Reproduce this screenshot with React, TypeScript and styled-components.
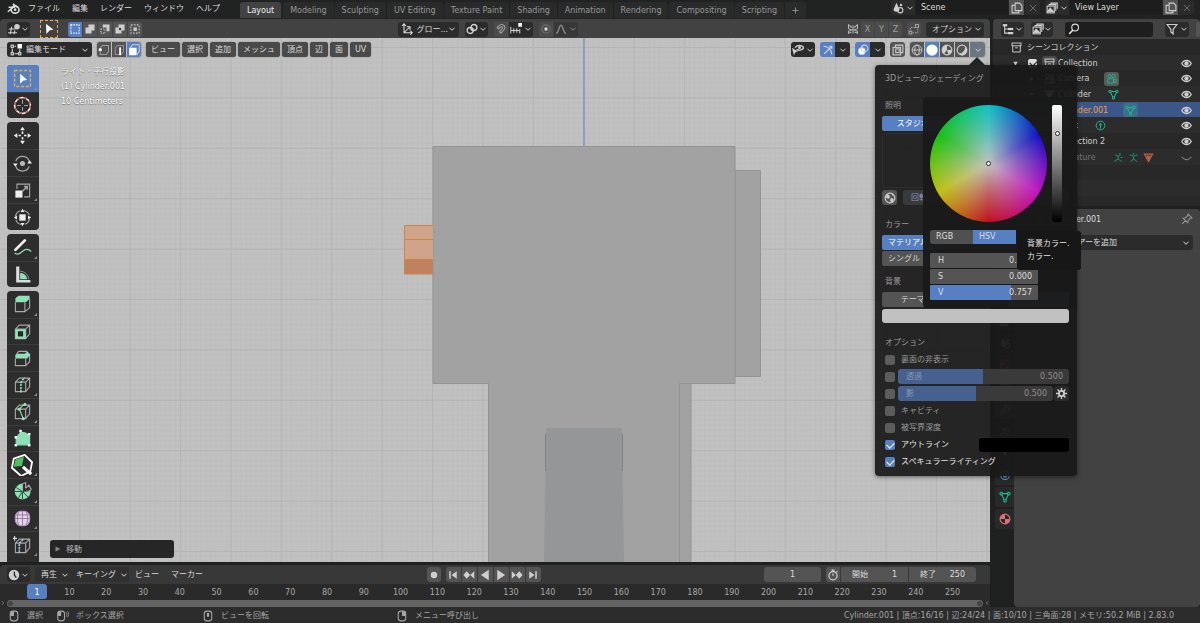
import React from "react";
import styled, { createGlobalStyle, css } from "styled-components";

const font = `"DejaVu Sans", "Noto Sans CJK JP", sans-serif`;
const blue = "#5680c2";
const green = "#8fe0b5";
const teal = "#1fb58f";

const Global = createGlobalStyle`
  * { box-sizing: border-box; }
  body { margin: 0; background: #1f2020; }
  body, button, input, select { font-family: ${font}; font-size: 8px; line-height: 15px; color: #dcdcdc; }
  button, input, select { margin: 0; padding: 0; border: 0; background: none; min-width: 0; }
  button { cursor: pointer; white-space: nowrap; }
  svg { flex: none; display: block; }
`;

/* ---------- icons ---------- */

const Svg = styled.svg<{ $s?: number }>`
  width: ${(p) => p.$s ?? 12}px;
  height: ${(p) => p.$s ?? 12}px;
  fill: none;
  stroke: currentColor;
  stroke-width: 1.4;
`;

const shapes: Record<string, React.ReactNode> = {
  chevron: <path d="M3 5.500l5 5L13 5.500" strokeWidth="2" />,
  plus: <path d="M8 1v14M1 8h14" strokeWidth="2" />,
  blender: (
    <g>
      <ellipse cx="10" cy="9.500" rx="4.800" ry="4.200" strokeWidth="2" />
      <circle cx="10" cy="9.500" r="1.700" fill="currentColor" stroke="none" />
      <path d="M9.500 5.500L7.500 2.500l6 4M2 6.500h8M1 12l6-5" strokeWidth="1.900" />
    </g>
  ),
  grid3d: (
    <g>
      <path d="M1 8h9M0 13h12M5 5L3 15M9 10l-1 5" strokeWidth="1.600" />
      <circle cx="12" cy="5" r="3.700" fill="currentColor" stroke="none" />
    </g>
  ),
  cursor: <path d="M4 1l10 8-5 .5-4.500 5z" fill="currentColor" stroke="none" />,
  selNew: <rect x="2.500" y="2.500" width="11" height="11" strokeDasharray="2 1.500" stroke="#fff" />,
  selAdd: <path d="M6 2h8v8h-4v4H2V6h4z" fill="currentColor" stroke="none" />,
  selSub: (
    <g>
      <path d="M5 2h9v9h-4V6H5z" fill="currentColor" stroke="none" />
      <rect x="2.500" y="8" width="5.500" height="5.500" strokeDasharray="1.500 1.500" />
    </g>
  ),
  selXor: (
    <g>
      <path d="M6 2h8v8h-4v4H2V6h4z" fill="currentColor" stroke="none" />
      <rect x="6.500" y="6.500" width="3" height="3" fill="#3c3c3c" stroke="none" />
    </g>
  ),
  selAnd: (
    <g>
      <rect x="2.500" y="2.500" width="11" height="11" strokeDasharray="2 2" />
      <rect x="6" y="6" width="4.500" height="4.500" fill="currentColor" stroke="none" />
    </g>
  ),
  axes: <path d="M4 1v12h11M1.500 4L4 1l2.500 3M12.500 10.500L15 13l-2.500 2.500M4 13l7-7M7.500 5H12v4.500" />,
  link: (
    <g strokeWidth="1.800">
      <circle cx="5.500" cy="10" r="4" />
      <circle cx="10.500" cy="6" r="4" />
      <circle cx="8" cy="8" r="1.200" fill="currentColor" />
    </g>
  ),
  magnet: <path d="M3 6l4-3.500c5-2 8 3 5 6.500l-4 4.500-2-2 4-4.500c1-2-1-2.500-2-1.500L4.500 8z" />,
  snap: (
    <g>
      <path d="M1 5v9M1 10h11M5 7v6M9 7v6M13 8v6" />
      <rect x="11" y="0" width="5" height="5" fill="#fff" stroke="none" />
    </g>
  ),
  prop: (
    <g>
      <circle cx="8" cy="8" r="5.500" opacity=".4" />
      <circle cx="8" cy="8" r="2.200" fill="#ddd" stroke="none" />
    </g>
  ),
  falloff: <path d="M1.500 14c4-1 3.500-11 6.500-11s2.500 10 6.500 11" strokeWidth="1.800" />,
  butterfly: <path d="M8 3v11M6.500 6L2 2.500v5L6.500 9 2 11v2.500l4-1.500M9.500 6L14 2.500v5L9.500 9l4.500 2v2.500l-4-1.500" />,
  merge: (
    <g>
      <path d="M3 12V6h6M6 13h7V8" strokeDasharray="2 1.500" />
      <rect x="10" y="2" width="4" height="4" />
      <rect x="1.500" y="11" width="3.500" height="3.500" />
    </g>
  ),
  editMode: (
    <g>
      <path d="M3 6v5M6 13h6M13 7v4M6 3h2" />
      <rect x="1.500" y="1.500" width="3" height="3" />
      <rect x="1.500" y="11.500" width="3" height="3" />
      <rect x="11.500" y="11.500" width="3" height="3" />
      <rect x="10" y="0" width="6" height="6" fill="#fff" stroke="none" />
    </g>
  ),
  vert: (
    <g>
      <path d="M3 5l3-3h8v8l-3 4H3v-4" opacity=".6" />
      <circle cx="3" cy="7.500" r="2.200" fill="#fff" stroke="none" />
    </g>
  ),
  edge: (
    <g>
      <path d="M3 14V5l3-3h8v8l-3 4z" opacity=".5" />
      <path d="M9.500 4.500V15" stroke="#fff" strokeWidth="2.500" />
    </g>
  ),
  face: (
    <g>
      <path d="M3 5l3-4h9v9l-3 4" />
      <rect x="1.500" y="5" width="10" height="10" fill="#fff" stroke="none" />
    </g>
  ),
  eyeCursor: (
    <g>
      <path d="M4 5c2-4 9-4 12 0-3 4-8 4-10 2" strokeWidth="1.800" />
      <circle cx="10" cy="4.800" r="2" fill="currentColor" stroke="none" />
      <path d="M0 5l8 5-3.500 1L2.500 15z" fill="currentColor" stroke="none" />
    </g>
  ),
  gizmo: <path d="M2 3c5 0 11 4 11 11M3 13L13 3M9.500 3H13v3.500" strokeWidth="1.600" />,
  overlay: (
    <g>
      <circle cx="6.500" cy="9.500" r="4.500" fill="#fff" />
      <circle cx="10" cy="6" r="4.500" />
    </g>
  ),
  xray: (
    <g>
      <rect x="1.500" y="4.500" width="10" height="10" />
      <path d="M4.500 4V1.500h10v10H12" />
      <rect x="5" y="6.500" width="4.500" height="5" />
    </g>
  ),
  wire: (
    <g strokeWidth="1.200">
      <circle cx="8" cy="8" r="6.500" />
      <ellipse cx="8" cy="8" rx="3" ry="6.500" />
      <path d="M1.500 8h13" />
    </g>
  ),
  solid: <circle cx="8" cy="8" r="7.500" fill="#fff" stroke="none" />,
  matprev: (
    <g>
      <circle cx="8" cy="8" r="6.500" />
      <path d="M8 8V1.500A6.500 6.500 0 0 0 4 13zM8 8h6.500A6.500 6.500 0 0 1 10 14z" fill="currentColor" stroke="none" />
    </g>
  ),
  rendered: (
    <g>
      <circle cx="8" cy="8" r="6.500" />
      <path d="M13 5a6 6 0 0 1-8 8.500C10 13 12 9 13 5z" fill="currentColor" />
    </g>
  ),
  scene: (
    <g>
      <path d="M6 1l4 9c0 4-8 4-8 0zM12 2l1 2" fill="currentColor" stroke="none" />
      <circle cx="11" cy="11" r="3.500" />
      <circle cx="12" cy="4" r="1.600" fill="currentColor" stroke="none" />
    </g>
  ),
  copy: (
    <g>
      <path d="M5.500 1.500h6l3 3v7h-9z" />
      <path d="M5 4.500H1.500v10h9V12" />
    </g>
  ),
  close: <path d="M2 2l12 12M14 2L2 14" strokeWidth="1.600" />,
  layers: (
    <g>
      <rect x="1.500" y="5.500" width="9.500" height="9" />
      <path d="M4 5V3.500h9V12M6.500 3V1.500H15V9" />
      <path d="M2 13l3.500-5 4.500 5z" fill="currentColor" />
    </g>
  ),
  tree: (
    <g>
      <rect x="1" y="1.500" width="6" height="3" fill="currentColor" stroke="none" />
      <rect x="8" y="6.500" width="7" height="3" fill="currentColor" stroke="none" />
      <rect x="8" y="12" width="7" height="3" fill="currentColor" stroke="none" />
      <path d="M3.500 4v9.500H8M3.500 8H8" />
    </g>
  ),
  search: (
    <g strokeWidth="1.500">
      <circle cx="9.500" cy="6" r="4.500" />
      <path d="M6.500 9.500L1.500 14.500" strokeWidth="2" />
    </g>
  ),
  filter: <path d="M1.500 2h13L9.500 8.500v6l-3-2.500V8.500z" strokeWidth="1.600" />,
  box: (
    <g>
      <rect x="1.500" y="1.500" width="13" height="4" />
      <path d="M2.500 5.500v9h11v-9M6 8.500h4" />
    </g>
  ),
  tri: <path d="M3 3l10 5-10 5z" fill="currentColor" stroke="none" />,
  triDown: <path d="M3 4l5 9 5-9z" fill="currentColor" stroke="none" />,
  eye: (
    <g strokeWidth="1.700">
      <path d="M1 8c3.500-6 10.500-6 14 0-3.500 6-10.500 6-14 0z" />
      <circle cx="8" cy="8" r="2.300" fill="currentColor" />
    </g>
  ),
  eyeShut: <path d="M1 7c3.500 5.500 10.500 5.500 14 0" strokeWidth="1.600" />,
  mesh: (
    <g strokeWidth="1.500">
      <path d="M4.500 3.500h7M3.500 4.500L7 12M12.500 4.500L9 12" />
      <circle cx="3" cy="3.500" r="1.700" />
      <circle cx="13" cy="3.500" r="1.700" />
      <circle cx="8" cy="13" r="1.700" />
    </g>
  ),
  camera: (
    <g>
      <circle cx="5" cy="4.500" r="2.500" />
      <circle cx="11" cy="4.500" r="2.500" />
      <path d="M2.500 8.500h8.500v6H2.500zM11 10.500l3.500-2v6l-3.500-2" />
    </g>
  ),
  light: (
    <g>
      <circle cx="8" cy="8" r="6.300" />
      <circle cx="8" cy="6.500" r="1.700" fill="currentColor" stroke="none" />
      <path d="M8 7v5.500" />
    </g>
  ),
  pose: <path d="M9 2l2 1M3 4l5 2 3-2M8 6l-1 4-5 4M7 10l6 4M11 8h3" strokeWidth="1.700" />,
  bone: <path d="M8 1v3M2 4l6 2 6-2M8 6v4l-4 4M8 10l5 4" strokeWidth="1.700" />,
  vgroup: <path d="M2 3h12L8 14zM6 6h4L8 10z" strokeWidth="1.700" />,
  pin: <path d="M9.500 1.500l5 5-2 .5-3 3-.5 3L3 7l3-.5 3-3zM6 10l-4.500 4.500" />,
  globe: (
    <g>
      <circle cx="8" cy="8" r="6.500" strokeWidth="1.500" />
      <path d="M3 3l4 1 1 3-2 2-3-1zM9 8l4 1-2 5-3-2zM10 2l3 2-2 1z" fill="currentColor" stroke="none" />
    </g>
  ),
  gear: (
    <g>
      <circle cx="8" cy="8" r="3.800" strokeWidth="2.600" />
      <path d="M8 0v4M8 12v4M0 8h4M12 8h4M2.300 2.300l3 3M10.700 10.700l3 3M2.300 13.700l3-3M10.700 5.300l3-3" strokeWidth="2" />
    </g>
  ),
  wrench: <path d="M10 2a4 4 0 0 0-2 5L2 13l2 2 6-6a4 4 0 0 0 5-4l-3 1.500L10 5z" />,
  physics: (
    <g strokeWidth="1.600">
      <circle cx="8" cy="8.500" r="5.500" />
      <circle cx="8" cy="9" r="2" fill="currentColor" />
      <path d="M9 3l4-2.500" />
    </g>
  ),
  material: (
    <g>
      <circle cx="8" cy="8" r="6.500" strokeWidth="1.600" />
      <path d="M8 8V1.500A6.500 6.500 0 0 0 1.500 8zM8 8v6.500A6.500 6.500 0 0 0 14.500 8z" fill="currentColor" stroke="none" />
    </g>
  ),
  clock: (
    <g>
      <circle cx="8" cy="8" r="7" fill="currentColor" stroke="none" />
      <path d="M8.500 3.500V8l2.500 3.500" stroke="#2a2a2a" strokeWidth="1.800" />
    </g>
  ),
  stopwatch: (
    <g strokeWidth="1.600">
      <circle cx="8" cy="9" r="5.500" />
      <path d="M8 9V6M6 1.500h4M8 1.500v2M12.500 4.500l1.500-1.500" />
    </g>
  ),
  record: <circle cx="8" cy="8" r="4.300" fill="currentColor" stroke="none" />,
  first: <path d="M3 3h2v10H3zM13 3v10L6 8z" fill="currentColor" stroke="none" />,
  prevKey: <path d="M5 3l4.500 5L5 13 .5 8zM15 3v10L9.500 8z" fill="currentColor" stroke="none" />,
  back: <path d="M13 1v14L2.500 8z" fill="currentColor" stroke="none" />,
  play: <path d="M3 1v14L13.500 8z" fill="currentColor" stroke="none" />,
  nextKey: <path d="M11 3l4.500 5L11 13 6.500 8zM1 3v10L6.500 8z" fill="currentColor" stroke="none" />,
  last: <path d="M13 3h-2v10h2zM3 3v10l7-5z" fill="currentColor" stroke="none" />,
  mouseL: (
    <g>
      <rect x="3" y="1.500" width="10" height="13" rx="3.500" />
      <path d="M3 2h5v6H3z" fill="currentColor" stroke="none" />
    </g>
  ),
  mouseDrag: (
    <g>
      <rect x="1" y="1.500" width="9" height="13" rx="3.500" />
      <path d="M1 2h4.500v6H1z" fill="currentColor" stroke="none" />
      <path d="M12 3c1.500 1 1.500 4 0 6M14 1.500c2 2.500 2 6 0 8.500" strokeWidth="1" />
    </g>
  ),
  mouseM: (
    <g>
      <rect x="3" y="1.500" width="10" height="13" rx="3.500" />
      <path d="M8 4v5" strokeWidth="3" />
    </g>
  ),
  mouseR: (
    <g>
      <rect x="3" y="1.500" width="10" height="13" rx="3.500" />
      <path d="M8 2h5v6H8z" fill="currentColor" stroke="none" />
    </g>
  ),
  left: <path d="M11 3L6 8l5 5" strokeWidth="1.800" />,
  right: <path d="M5 3l5 5-5 5" strokeWidth="1.800" />,
};

const Icon = ({ n, s }: { n: string; s?: number }) => (
  <Svg $s={s} viewBox="0 0 16 16" aria-hidden="true">
    {shapes[n]}
  </Svg>
);

/* Tool icons use a 24 unit grid */
const cube = "M3 9l5-5h13v11l-5 6H3zM3 9h13v12M16 9l5-5";
const tools: Record<string, React.ReactNode> = {
  select: (
    <g>
      <rect x="2" y="2" width="20" height="20" stroke="#f2a93b" strokeWidth="1.800" strokeDasharray="4 2" />
      <path d="M9 6l9 8-5 .5-4 4z" fill="#fff" stroke="none" />
    </g>
  ),
  cursor3d: (
    <g>
      <circle cx="12" cy="12" r="10" stroke="#fff" strokeWidth="1.800" />
      <circle cx="12" cy="12" r="10" stroke="#c0483c" strokeWidth="1.800" strokeDasharray="4 4" />
      <path d="M12 5v5M12 14v5M5 12h5M14 12h5" strokeWidth="1.200" />
    </g>
  ),
  move: (
    <g fill="#eee" stroke="none">
      <path d="M12 1l3 4.500H9zM12 23l-3-4.500h6zM1 12l4.500-3v6zM23 12l-4.500 3V9z" />
      <path d="M11 7h2v3h-2zM11 14h2v3h-2zM7 11h3v2H7zM14 11h3v2h-3z" />
    </g>
  ),
  rotate: (
    <g>
      <path d="M3.500 9a9 9 0 0 1 17 0M3.500 15.500a9 9 0 0 0 17 0" strokeWidth="1.500" />
      <circle cx="12" cy="12" r="3.200" fill="#bbb" stroke="none" />
      <path d="M0 12h6l-3 4zM18 12h6l-3-4z" fill="#eee" stroke="none" />
    </g>
  ),
  scale: (
    <g>
      <path d="M5 10V4h16v16h-7" />
      <rect x="3" y="12" width="9" height="9" fill="#eee" stroke="none" />
      <path d="M12 13l6-6M14 7h4v4" strokeWidth="1.800" />
    </g>
  ),
  transform: (
    <g>
      <circle cx="12" cy="12" r="9" strokeWidth="1.500" strokeDasharray="9 5" strokeDashoffset="-2" />
      <rect x="8" y="8" width="8" height="8" fill="#eee" stroke="none" />
      <path d="M12 1l2.500 4h-5zM12 23l-2.500-4h5zM1 12l4-2.500v5zM23 12l-4 2.500v-5z" fill="#eee" stroke="none" />
    </g>
  ),
  annotate: (
    <g>
      <path d="M3 15L15 3" stroke="#eee" strokeWidth="3.500" strokeLinecap="round" />
      <path d="M2 19c5 4 8-1 11-3s7-2 10 1" stroke={green} strokeWidth="1.500" />
    </g>
  ),
  measure: (
    <g>
      <path d="M4 2h4v17h14v3H4z" fill="#ddd" stroke="none" />
      <path d="M9 18v-8c5 0 8 3 9 8z" fill={green} stroke="none" />
      <path d="M9 8c6 0 10 4 11 10" strokeWidth="1" />
    </g>
  ),
  extrude: (
    <g>
      <path d="M3 9v12h12V9M15 21l6-5V5" />
      <path d="M3 4l4-3h14v4l-5 4H3z" fill={green} stroke="none" />
    </g>
  ),
  inset: (
    <g>
      <path d={cube} />
      <path d="M3 9h13v12H3z" fill={green} stroke="none" />
      <rect x="7" y="12.500" width="5" height="5" fill="#2d2d2d" stroke="#1c1c1c" />
    </g>
  ),
  bevel: (
    <g>
      <path d="M3 12v9h13v-9M16 21l5-5V7M7 3h11M3 9l4-6" />
      <path d="M5 6h10l3-3 4 4-4 5H3V9z" fill={green} stroke="none" />
    </g>
  ),
  loopcut: (
    <g>
      <path d={cube} />
      <path d="M10 22V9l5-6" stroke={green} strokeWidth="2" strokeDasharray="3 1" />
    </g>
  ),
  knife: (
    <g>
      <path d={cube} />
      <path d="M15 2L8 9l5 12" stroke={green} />
      <g fill={green} stroke="none">
        <circle cx="15" cy="3" r="2" />
        <circle cx="8" cy="9" r="2" />
        <circle cx="13" cy="21" r="2" />
      </g>
    </g>
  ),
  poly: (
    <g>
      <path d="M4 20V11l6-7 6 1 5 4v11z" fill={green} stroke={green} />
      <g fill="#fff" stroke="none">
        <rect x="2" y="19" width="3" height="3" />
        <rect x="19" y="19" width="3" height="3" />
        <rect x="2" y="9" width="3" height="3" />
        <rect x="8" y="1" width="3" height="3" />
        <rect x="19" y="5" width="3" height="3" />
      </g>
    </g>
  ),
  addon: (
    <g>
      <path d="M3 5l12-4 8 8-2 10-10 5-10-9z" stroke="#fff" strokeWidth="2" />
      <path d="M5 6l9-3-2 10-9 1z" fill="#4fc060" stroke="none" />
      <path d="M13 14l9 8" stroke="#fff" strokeWidth="3.500" />
    </g>
  ),
  spin: (
    <g>
      <path d="M12 12V2a10 10 0 1 0 10 8z" fill={green} stroke="none" />
      <path d="M12 12l-8-5M12 12H2M12 12l-5 8M12 12v10M12 12l7 7M12 12l10-1" stroke="#254a3a" strokeWidth="1.200" />
      <path d="M12 12V2l4-1v7M16 8l4-4 3 5-4 4" />
    </g>
  ),
  smooth: (
    <g>
      <rect x="3" y="3" width="18" height="18" rx="7" fill="#e3d3e8" stroke="#b79ac2" />
      <path d="M3 12h18M12 3v18M7 4c-2 5-2 11 0 16M17 4c2 5 2 11 0 16M4 7.500h16" stroke="#8a6f95" strokeWidth="1" />
    </g>
  ),
  slide: (
    <g>
      <path d={cube} />
      <path d="M8 21V9l5-5" stroke="#a5c2ee" strokeWidth="2" strokeDasharray="3 1" />
      <path d="M2 0v6M-1 3h6" stroke="#ddd" />
    </g>
  ),
};

/* ---------- shared controls ---------- */

const Row = styled.div<{ $gap?: number }>`
  display: flex;
  align-items: center;
  gap: ${(p) => p.$gap ?? 0}px;
`;

const ctl = css`
  height: 15px;
  border-radius: 3px;
  display: flex;
  align-items: center;
`;

const DropButton = styled.button<{ $w?: number; $dim?: boolean }>`
  ${ctl}
  width: ${(p) => (p.$w ? `${p.$w}px` : "auto")};
  padding: 0 1px;
  justify-content: space-between;
  background: ${(p) => (p.$dim ? "#383838" : "#2b2b2b")};
  color: ${(p) => (p.$dim ? "#868686" : "#cfcfcf")};
`;

const Group = styled.div<{ $border?: boolean; $gap?: number }>`
  display: flex;
  gap: ${(p) => p.$gap ?? 1}px;
  border-radius: 3px;
  ${(p) => p.$border && "box-shadow: 0 0 0 1px #8a8a8a66;"}
  & > *:not(:first-child) { border-top-left-radius: 0; border-bottom-left-radius: 0; }
  & > *:not(:last-child) { border-top-right-radius: 0; border-bottom-right-radius: 0; }
`;

type Tone = "on" | "off" | "dark" | "dim";
const tones: Record<Tone, string> = { on: blue, off: "#545454", dark: "#2b2b2b", dim: "#4c4c4c" };

const IconButton = styled.button<{ $tone?: Tone; $w?: number }>`
  ${ctl}
  justify-content: center;
  width: ${(p) => p.$w ?? 14}px;
  background: ${(p) => tones[p.$tone ?? "off"]};
  color: ${(p) => (p.$tone === "dim" ? "#a0a0a0" : "#cfcfcf")};
`;

const SelectBox = styled.label<{ $w?: number }>`
  ${ctl}
  width: ${(p) => (p.$w ? `${p.$w}px` : "100%")};
  padding: 0 3px;
  gap: 4px;
  background: #2b2b2b;
  select { appearance: none; flex: 1; height: 15px; }
  svg:last-child { margin-left: -7px; pointer-events: none; }
`;

const Select = ({ icon, w, label, value }: { icon?: string; w?: number; label: string; value: string }) => (
  <SelectBox $w={w}>
    {icon && <Icon n={icon} />}
    <select aria-label={label}>
      <option>{value}</option>
    </select>
    <Icon n="chevron" s={8} />
  </SelectBox>
);

const IconDrop = ({ icon, w = 23, dim, label }: { icon: string; w?: number; dim?: boolean; label: string }) => (
  <DropButton $w={w} $dim={dim} aria-label={label}>
    <Icon n={icon} />
    <Icon n="chevron" s={8} />
  </DropButton>
);

/* ---------- top bar ---------- */

const TopBar = styled.header`
  display: flex;
  height: 19px;
  padding: 0 6px 0 7px;
  background: #212222;
`;
const MenuBar = styled.nav`
  display: flex;
  gap: 12px;
  height: 15px;
  align-items: center;
  margin: 1px 20px 0 8px;
`;
const MenuButton = styled.button`
  height: 15px;
`;
const Tabs = styled.nav`
  display: flex;
  flex: 1;
  gap: 1px;
  align-items: flex-end;
  padding-bottom: 1px;
`;
const Tab = styled.button<{ $on?: boolean }>`
  height: 16px;
  padding: 1px 7px 0;
  margin-right: ${(p) => (p.$on ? 1 : 0)}px;
  border-radius: 3px 3px 0 0;
  background: ${(p) => (p.$on ? "#424242" : "#292a2a")};
  color: ${(p) => (p.$on ? "#f0f0f0" : "#989898")};
`;
const NameField = styled.input`
  width: 92px;
  height: 15px;
  padding: 0 5px;
  background: #1d1d1d;
`;
const Logo = styled.div`
  padding-top: 2px;
`;

const tabNames = ["Modeling", "Sculpting", "UV Editing", "Texture Paint", "Shading", "Animation", "Rendering", "Compositing", "Scripting"];

const DataBlock = ({ icon, name }: { icon: string; name: string }) => (
  <Group>
    <IconDrop icon={icon} w={24} label={name} />
    <NameField aria-label={`${name} name`} defaultValue={name} />
    <IconButton aria-label="New" $w={15}>
      <Icon n="copy" />
    </IconButton>
    <RemoveButton aria-label="Remove" $tone="dark" $w={15}>
      <Icon n="close" s={8} />
    </RemoveButton>
  </Group>
);
const RemoveButton = styled(IconButton)`
  color: #7a7a7a;
`;

/* ---------- page frame ---------- */

const Page = styled.div`
  display: flex;
  flex-direction: column;
  min-height: 100vh;
  background: #1f2020;
`;
const Main = styled.main`
  flex: 1;
  display: grid;
  grid-template-columns: minmax(0, 1fr) 207px;
  gap: 3px;
`;
const Column = styled.div`
  display: flex;
  flex-direction: column;
  gap: 3px;
  min-width: 0;
`;
const Area = styled.section<{ $grow?: boolean }>`
  display: flex;
  flex-direction: column;
  flex: ${(p) => (p.$grow ? 1 : "none")};
`;
const ToolHeader = styled.div`
  display: grid;
  grid-template-columns: 1fr auto 1fr;
  align-items: center;
  height: 19px;
  padding: 1px 6px 0 7px;
  background: #424242;
  border-radius: 4px 4px 0 0;
`;
const Middle = styled.div<{ $gap: number }>`
  display: flex;
  align-items: center;
  gap: ${(p) => p.$gap}px;
  margin-right: 16px;
`;
const End = styled.div<{ $gap: number }>`
  display: flex;
  align-items: center;
  justify-content: flex-end;
  gap: ${(p) => p.$gap}px;
`;
const TopEnd = styled(End)`
  align-items: flex-start;
`;
const ActiveTool = styled.span`
  display: flex;
  align-items: center;
  justify-content: center;
  width: 18px;
  height: 18px;
  margin: 0 10px;
  border: 1px dashed #f2a93b;
  color: #fff;
`;
const Plain = styled.span`
  display: flex;
  color: #b5b5b5;
`;

/* ---------- 3D viewport ---------- */

const Viewport = styled.div`
  position: relative;
  flex: 1;
  display: flex;
  flex-direction: column;
  background: #c1c1c1;
`;
const Scene = styled.svg`
  position: absolute;
  inset: 0;
  width: 100%;
  height: 100%;
`;
const ViewHeader = styled.div`
  position: relative;
  z-index: 2;
  display: flex;
  justify-content: space-between;
  padding: 4px 5px 7px 7px;
`;
const ViewMenu = styled.button`
  height: 15px;
  padding: 0 5px;
  border-radius: 3px;
  background: #4a4a4a;
  box-shadow: 0 0 1px #333;
`;
const ViewBody = styled.div`
  position: relative;
  flex: 1;
  display: flex;
  gap: 11px;
  padding-left: 7px;
`;
const Toolbar = styled.div`
  display: flex;
  flex-direction: column;
  gap: 4px;
  width: 32px;
  padding-top: 1px;
`;
const ToolBlock = styled.div<{ $h: number }>`
  display: grid;
  grid-auto-rows: 1fr;
  height: ${(p) => p.$h}px;
  border-radius: 4px;
  overflow: hidden;
  background: #2d2d2d;
  &:last-child { border-radius: 4px 4px 0 0; padding-bottom: 4px; }
`;
const ToolButton = styled.button<{ $on?: boolean }>`
  display: flex;
  align-items: center;
  justify-content: center;
  position: relative;
  min-height: 0;
  padding-right: 2px;
  color: #a8a8a8;
  background: ${(p) => (p.$on ? blue : "transparent")};
  & + & { border-top: 1px solid #3c3c3c; }
`;
const Corner = styled.i`
  position: absolute;
  right: 2px;
  bottom: 2px;
  border: solid transparent;
  border-width: 3px 0 0 3px;
  border-right: 3px solid #8d8d8d;
  border-top: 3px solid transparent;
  border-left: 0;
`;
const ViewInfo = styled.div`
  display: flex;
  flex-direction: column;
  justify-content: space-between;
  padding-bottom: 4px;
`;
const InfoText = styled.p`
  margin: 0 0 0 11px;
  color: #fff;
  text-shadow: 0 1px 1px #777, 0 0 1px #888;
`;
const OperatorPanel = styled.button`
  display: flex;
  align-items: center;
  gap: 4px;
  width: 124px;
  height: 18px;
  padding-left: 4px;
  border-radius: 3px;
  background: #262626;
  color: #b5b5b5;
  svg { color: #888; }
`;

type Tool = [string, boolean];
const toolBlocks: { h: number; items: Tool[] }[] = [
  { h: 53, items: [["select", true], ["cursor3d", false]] },
  { h: 108, items: [["move", false], ["rotate", false], ["scale", true], ["transform", false]] },
  { h: 53, items: [["annotate", true], ["measure", false]] },
  {
    h: 271,
    items: [
      ["extrude", true], ["inset", false], ["bevel", false], ["loopcut", true], ["knife", true],
      ["poly", false], ["addon", true], ["spin", true], ["smooth", true], ["slide", true],
    ],
  },
];

const lines = (start: number, step: number, end: number) => {
  const out: number[] = [];
  for (let v = start; v < end; v += step) out.push(v);
  return out;
};

const ModelView = () => (
  <Scene viewBox="0 38 990 524" preserveAspectRatio="xMidYMid slice" aria-hidden="true">
    <g stroke="#b9b9b9" strokeWidth="1" opacity=".35">
      {lines(4.1, 5.04, 990).map((x) => <path key={x} d={`M${x} 38V562`} />)}
      {lines(42.4, 5.04, 562).map((y) => <path key={y} d={`M0 ${y}H990`} />)}
    </g>
    <g stroke="#b4b4b4" strokeWidth="1">
      {lines(29.4, 50.4, 990).map((x) => <path key={x} d={`M${x} 38V562`} />)}
      {lines(47.5, 50.4, 562).map((y) => <path key={y} d={`M0 ${y}H990`} />)}
    </g>
    <path d="M584 38V147" stroke="#6f8cc4" strokeWidth="1.200" />
    <g fill="#a2a2a2" stroke="#929494">
      <path d="M735 170.500h25.500v206H735z" />
      <path d="M679.500 383.500h11.500V563h-11.500z" />
      <path d="M433 146.500h302v237H679.500V563H488.500V383.500H433z" />
    </g>
    <path d="M546 428h76l2 134h-80z" fill="#949698" />
    <path d="M545.500 434v37M622.500 434v37" stroke="#7f8282" />
    <path d="M404.500 225.500H433v34h-28.500z" fill="#cfa48b" />
    <path d="M404.500 259.500H433V274h-28.500z" fill="#c08160" />
    <path d="M433 225.500h-28.500V274H433M404.500 239.500H433M404.500 259.500H433" fill="none" stroke="#cf8548" />
  </Scene>
);

/* ---------- shading popover ---------- */

const Anchor = styled.div`
  position: relative;
  display: flex;
`;
const Popover = styled.div`
  position: absolute;
  top: 23px;
  right: -92px;
  width: 202px;
  padding: 6px 8px 6px 7px;
  border-radius: 4px;
  background: rgba(25, 25, 25, 0.93);
  box-shadow: 0 1px 4px rgba(0, 0, 0, 0.5);
  color: #8f8f8f;
  &::before {
    content: "";
    position: absolute;
    top: -8px;
    left: 94px;
    border: 8px solid transparent;
    border-top: 0;
    border-bottom-color: #222;
  }
`;
const Heading = styled.h3<{ $top?: number }>`
  margin: ${(p) => p.$top ?? 0}px 0 0 3px;
  font-size: 8px;
  font-weight: 400;
  line-height: 15px;
  color: #9c9c9c;
`;
const Choices = styled.div`
  display: grid;
  grid-template-columns: repeat(3, 1fr);
  gap: 1px;
  margin-top: 3px;
`;
const Choice = styled.button<{ $on?: boolean }>`
  height: 15px;
  padding: 0 6px;
  overflow: hidden;
  border-radius: 2px;
  background: ${(p) => (p.$on ? blue : "#545454")};
  color: ${(p) => (p.$on ? "#fff" : "#d5d5d5")};
`;
const WideChoice = styled(Choice)`
  text-align: left;
`;
const Preview = styled.div`
  height: 55px;
  margin: 2px 0;
  border: 1px solid #2e2e2e;
  border-radius: 3px;
`;
const Swatch = styled.button<{ $c: string; $w?: number }>`
  display: block;
  width: ${(p) => (p.$w ? `${p.$w}px` : "100%")};
  height: 14px;
  border-radius: 3px;
  background: ${(p) => p.$c};
`;
const OptionRow = styled.div`
  display: flex;
  align-items: center;
  height: 17px;
  gap: 1px;
  padding-left: 3px;
`;
const Check = styled.label<{ $on?: boolean }>`
  display: flex;
  align-items: center;
  gap: 6px;
  flex: 1;
  color: ${(p) => (p.$on ? "#e8e8e8" : "#9a9a9a")};
`;
const Box = styled.input.attrs({ type: "checkbox" })`
  appearance: none;
  position: relative;
  flex: none;
  width: 10px;
  height: 10px;
  border-radius: 2px;
  background: #5c5c5c;
  &:checked { background: ${blue}; }
  &:checked::after {
    content: "";
    position: absolute;
    left: 3px;
    top: 1px;
    width: 4px;
    height: 6px;
    border: solid #fff;
    border-width: 0 1px 1px 0;
    transform: rotate(45deg);
  }
`;
const SliderBox = styled.label<{ $fill: number; $dim?: boolean }>`
  display: flex;
  flex: 1;
  min-width: 0;
  height: 15px;
  padding: 0 6px 0 8px;
  border-radius: 3px;
  background: linear-gradient(90deg, ${(p) => (p.$dim ? "#46618f" : blue)} ${(p) => p.$fill}%, ${(p) => (p.$dim ? "#3a3a3a" : "#545454")} 0);
  color: ${(p) => (p.$dim ? "#8799b8" : "#dcdcdc")};
  input { flex: 1; width: 20px; height: 15px; text-align: right; color: ${(p) => (p.$dim ? "#909090" : "#dcdcdc")}; }
`;
const Slider = ({ label, value, fill, dim }: { label: string; value: string; fill: number; dim?: boolean }) => (
  <SliderBox $fill={fill} $dim={dim}>
    {label}
    <input defaultValue={value} />
  </SliderBox>
);
const LightRow = styled.div`
  display: flex;
  gap: 6px;
`;
const BackgroundSwatch = styled(Swatch)`
  margin-top: 2px;
`;
const OptionList = styled.div`
  margin-top: 1px;
`;
const Gap = styled.span`
  width: 1px;
`;

const Picker = styled.div`
  position: absolute;
  top: 32px;
  left: 48px;
  width: 154px;
  padding: 8px 7px;
  border-radius: 4px;
  background: rgba(26, 26, 26, 0.97);
`;
const WheelRow = styled.div`
  display: flex;
`;
const Wheel = styled.div`
  display: grid;
  place-items: center;
  width: 117px;
  height: 117px;
  border-radius: 50%;
  background: radial-gradient(closest-side, #c1c1c1, rgba(193, 193, 193, 0.45) 50%, rgba(193, 193, 193, 0)),
    conic-gradient(from 180deg, #c1101c, #c1c110, #10c110, #10c1c1, #1010c1, #c110c1, #c1101c);
`;
const Dot = styled.i`
  width: 5px;
  height: 5px;
  border: 1px solid #222;
  border-radius: 50%;
  background: #fff;
`;
const ValueBar = styled.div`
  display: flex;
  justify-content: center;
  width: 10px;
  margin-left: auto;
  margin-right: 8px;
  padding-top: 26px;
  border-radius: 2px;
  background: linear-gradient(#fff, #000);
`;
const ModelTabs = styled.div`
  display: grid;
  grid-template-columns: repeat(2, 43px);
  margin: 8px 0 9px;
`;
const ModelTab = styled.button<{ $on?: boolean }>`
  height: 14px;
  padding-left: 6px;
  text-align: left;
  line-height: 14px;
  background: ${(p) => (p.$on ? blue : "#505050")};
  &:first-child { border-radius: 3px 0 0 3px; }
`;
const Channels = styled.div`
  display: flex;
  flex-direction: column;
  gap: 1px;
  width: 108px;
  & > label { border-radius: 1px; flex: none; }
`;
const Tooltip = styled.div`
  position: absolute;
  top: 166px;
  left: 142px;
  width: 64px;
  padding: 6px 0 7px 10px;
  border-radius: 3px;
  background: #171717;
  color: #e6e6e6;
  line-height: 13px;
  white-space: pre;
`;

const ShadingPopover = () => (
  <Popover role="dialog" aria-label="3Dビューのシェーディング">
    <Heading>3Dビューのシェーディング</Heading>
    <Heading $top={12}>照明</Heading>
    <Choices>
      <Choice $on>スタジオ</Choice>
      <Choice aria-label="MatCap" />
      <Choice aria-label="フラット" />
    </Choices>
    <Preview />
    <LightRow>
      <IconButton $w={15} aria-label="World space lighting">
        <Icon n="globe" />
      </IconButton>
      <Slider label="回転" value="" fill={0} dim />
    </LightRow>
    <Heading $top={12}>カラー</Heading>
    <Choices>
      <WideChoice $on>マテリアル</WideChoice>
      <Choice aria-label="オブジェクト" />
      <Choice aria-label="頂点" />
      <WideChoice>シングル</WideChoice>
      <Choice aria-label="ランダム" />
      <Choice aria-label="テクスチャ" />
    </Choices>
    <Heading $top={8}>背景</Heading>
    <Choices>
      <Choice>テーマ</Choice>
      <Choice aria-label="ワールド" />
      <Choice $on aria-label="ビューポート" />
    </Choices>
    <BackgroundSwatch $c="#c1c1c1" aria-label="背景カラー" />
    <Heading $top={12}>オプション</Heading>
    <OptionList>
      <OptionRow>
        <Check><Box />裏面の非表示</Check>
      </OptionRow>
      <OptionRow>
        <Box aria-label="透過を使用" />
        <Gap />
        <Slider label="透過" value="0.500" fill={50} dim />
      </OptionRow>
      <OptionRow>
        <Box aria-label="影を使用" />
        <Gap />
        <Slider label="影" value="0.500" fill={50} dim />
        <IconButton $tone="dark" $w={15} aria-label="影の設定">
          <Icon n="gear" s={11} />
        </IconButton>
      </OptionRow>
      <OptionRow>
        <Check><Box />キャビティ</Check>
      </OptionRow>
      <OptionRow>
        <Check><Box />被写界深度</Check>
      </OptionRow>
      <OptionRow>
        <Check $on><Box defaultChecked />アウトライン</Check>
        <Swatch $c="#000" $w={90} aria-label="アウトラインカラー" />
      </OptionRow>
      <OptionRow>
        <Check $on><Box defaultChecked />スペキュラーライティング</Check>
      </OptionRow>
    </OptionList>
    <Picker>
      <WheelRow>
        <Wheel><Dot /></Wheel>
        <ValueBar><Dot /></ValueBar>
      </WheelRow>
      <ModelTabs>
        <ModelTab>RGB</ModelTab>
        <ModelTab $on>HSV</ModelTab>
      </ModelTabs>
      <Channels>
        <Slider label="H" value="0.000" fill={0} />
        <Slider label="S" value="0.000" fill={0} />
        <Slider label="V" value="0.757" fill={75} />
      </Channels>
    </Picker>
    <Tooltip role="tooltip">{"背景カラー.\nカラー."}</Tooltip>
  </Popover>
);

/* ---------- outliner ---------- */

const OutHeader = styled.div`
  display: flex;
  align-items: center;
  height: 20px;
  padding-left: 8px;
  gap: 7px;
  overflow: hidden;
  background: #424242;
  border-radius: 4px 4px 0 0;
`;
const Search = styled.label`
  ${ctl}
  flex: 1;
  margin: 0 5px;
  padding-left: 3px;
  background: #1e1e1e;
  input { width: 100%; }
`;
const Tree = styled.div`
  display: grid;
  grid-template-rows: repeat(10, 1fr) 10px;
  height: 167px;
  background: #282828;
`;
const TreeRow = styled.div<{ $on?: boolean; $muted?: boolean }>`
  display: flex;
  align-items: center;
  min-height: 0;
  padding: 1px 8px 0 0;
  color: ${(p) => (p.$on ? "#f0a040" : p.$muted ? "#727272" : "#cfcfcf")};
  background: ${(p) => (p.$on ? "#3b5689" : "transparent")};
  &:nth-child(even) { background: ${(p) => (p.$on ? "#3b5689" : "#2c2c2c")}; }
`;
const Slot = styled.span<{ $w: number }>`
  display: flex;
  justify-content: center;
  width: ${(p) => p.$w}px;
`;
const DataIcon = styled.span<{ $c?: string; $box?: string }>`
  display: flex;
  align-items: center;
  justify-content: center;
  width: 15px;
  height: 14px;
  border-radius: 3px;
  color: ${(p) => p.$c ?? teal};
  background: ${(p) => p.$box ?? "transparent"};
`;
const DataIcons = styled.span`
  display: flex;
  margin-left: 15px;
`;
const EyeButton = styled.button<{ $muted?: boolean }>`
  margin-left: auto;
  color: ${(p) => (p.$muted ? "#777" : "#d0d0d0")};
`;
const TreeCheck = styled(Box)`
  width: 9px;
  height: 9px;
  background: #ddd;
  &:checked { background: #ddd; }
  &:checked::after { border-color: #222; top: 0; }
`;

type Item = { name: string; on?: boolean; muted?: boolean; icon: string; data?: { n: string; c?: string; box?: string }[] };
const items: Item[] = [
  { name: "Camera", icon: "camera", data: [{ n: "camera", box: "#5a5a5a" }] },
  { name: "Cylinder", icon: "vgroup", data: [{ n: "mesh" }] },
  { name: "Cylinder.001", icon: "vgroup", on: true, data: [{ n: "mesh", box: "#3c7088" }] },
  { name: "Light", icon: "light", data: [{ n: "light" }] },
  { name: "Collection 2", icon: "box" },
  { name: "Armature", icon: "pose", muted: true, data: [{ n: "pose", c: "#1f8068" }, { n: "bone", c: "#1f8068" }, { n: "vgroup", c: "#b5653f" }] },
];

const Outliner = () => (
  <Area>
    <OutHeader>
      <IconDrop icon="tree" label="Editor type" />
      <IconDrop icon="layers" label="Display mode" w={22} />
      <Search>
        <Icon n="search" />
        <input aria-label="Search" />
      </Search>
      <IconDrop icon="filter" label="Filter" w={24} />
      <IconButton $w={4} aria-label="New collection" />
    </OutHeader>
    <Tree>
      <TreeRow>
        <Slot $w={17} />
        <Slot $w={12}><Icon n="box" s={11} /></Slot>
        <Slot $w={5} />
        シーンコレクション
      </TreeRow>
      <TreeRow>
        <Slot $w={14} />
        <Slot $w={17}><Icon n="triDown" s={7} /></Slot>
        <Slot $w={16}><TreeCheck defaultChecked aria-label="Collection" /></Slot>
        <Slot $w={18}><DataIcon $c="#ccc" $box="#484848"><Icon n="box" s={11} /></DataIcon></Slot>
        Collection
        <EyeButton aria-label="Hide"><Icon n="eye" s={11} /></EyeButton>
      </TreeRow>
      {items.map((it) => (
        <TreeRow key={it.name} $on={it.on} $muted={it.muted}>
          <Slot $w={31} />
          <Slot $w={16}><Icon n="tri" s={6} /></Slot>
          <Slot $w={18}><Icon n={it.icon} s={11} /></Slot>
          {it.name}
          {it.data && (
            <DataIcons>
              {it.data.map((d) => (
                <DataIcon key={d.n} $c={d.c} $box={d.box}><Icon n={d.n} s={11} /></DataIcon>
              ))}
            </DataIcons>
          )}
          <EyeButton $muted={it.muted} aria-label="Hide">
            <Icon n={it.muted ? "eyeShut" : "eye"} s={11} />
          </EyeButton>
        </TreeRow>
      ))}
      <TreeRow />
      <TreeRow />
      <TreeRow />
    </Tree>
  </Area>
);

/* ---------- properties ---------- */

const Props = styled.section`
  flex: 1;
  display: flex;
`;
const PropNav = styled.nav`
  display: flex;
  flex-direction: column;
  gap: 2px;
  width: 21px;
  padding: 36px 0 0 2px;
`;
const PropTab = styled.button<{ $c?: string; $on?: boolean }>`
  display: flex;
  align-items: center;
  justify-content: center;
  height: 20px;
  border-radius: 3px 0 0 3px;
  background: ${(p) => (p.$on ? "#424242" : "#292929")};
  color: ${(p) => p.$c ?? "#b0b0b0"};
`;
const PropBody = styled.div`
  flex: 1;
  padding: 2px 7px 0 5px;
  background: #424242;
  border-radius: 4px;
`;
const Crumb = styled.div`
  display: flex;
  align-items: center;
  height: 16px;
  margin-bottom: 8px;
  padding-left: 14px;
  gap: 3px;
  & > svg { margin-left: auto; color: #999; }
`;
const AddModifier = styled.div`
  select { padding-left: 8px; }
`;

const propTabs: { n: string; c?: string; on?: boolean }[] = [
  { n: "wrench" }, { n: "camera" }, { n: "copy" }, { n: "layers" }, { n: "scene" }, { n: "globe", c: "#c95f5f" },
  { n: "xray", c: "#d08a4a" }, { n: "wrench", c: "#6d94d8", on: true }, { n: "pose", c: "#6d94d8" }, { n: "prop", c: "#6d94d8" },
  { n: "physics", c: "#6d94d8" }, { n: "mesh", c: teal }, { n: "material", c: "#d9707a" },
];

/* ---------- timeline and status ---------- */

const Timeline = styled.section`
  position: relative;
`;
const TimeHeader = styled(ToolHeader)`
  padding: 0 14px 0 7px;
  background: #383838;
`;
const TimeMenus = styled.div`
  display: flex;
  align-items: center;
`;
const TimeGap = styled.span`
  width: 5px;
`;
const TimeDrop = styled.button`
  display: flex;
  align-items: center;
  gap: 4px;
  height: 15px;
  padding: 0 1px 0 6px;
  background: #303030;
`;
const TimeMenu = styled.button`
  height: 15px;
  margin-left: 6px;
  padding-right: 6px;
`;
const FrameField = styled.label<{ $w: number; $center?: boolean }>`
  ${ctl}
  width: ${(p) => p.$w}px;
  padding: 0 11px;
  background: #545454;
  white-space: nowrap;
  input { flex: 1; width: 20px; height: 15px; text-align: ${(p) => (p.$center ? "center" : "right")}; }
`;
const Ruler = styled.div`
  display: grid;
  grid-template-columns: 51px repeat(25, 1fr);
  height: 15px;
  padding-right: 19px;
  background: #2a2a2a;
  color: #a8a8a8;
  text-align: center;
  line-height: 17px;
`;
const Current = styled.div`
  width: 20px;
  height: 15px;
  margin-left: 27px;
  border-radius: 3px;
  background: ${blue};
  color: #fff;
`;
const ScrollTrack = styled.div`
  display: flex;
  align-items: center;
  gap: 1px;
  height: 8px;
  background: #2a2a2a;
  color: #999;
`;
const ScrollThumb = styled.div`
  display: flex;
  align-items: center;
  justify-content: space-between;
  flex: 1;
  height: 7px;
  padding: 0 1px;
  border-radius: 4px;
  background: #646464;
  i { width: 5px; height: 5px; border-radius: 50%; background: #454545; }
`;
const Status = styled.footer`
  display: grid;
  grid-template-columns: 194px 194px 1fr auto;
  align-items: center;
  height: 16px;
  padding: 1px 26px 0 8px;
  background: #2c2c2c;
  color: #a6a6a6;
`;
const OptionsDrop = styled(DropButton)`
  width: 58px;
  padding: 0 2px 0 6px;
`;
const ShadingToggle = styled(IconButton)`
  background: #6b7680;
`;

const transport = ["first", "prevKey", "back", "play", "nextKey", "last"];

export default function App() {
  return (
    <Page lang="ja">
      <Global />
      <TopBar>
        <Logo><Icon n="blender" s={13} /></Logo>
        <MenuBar>
          {["ファイル", "編集", "レンダー", "ウィンドウ", "ヘルプ"].map((m) => <MenuButton key={m}>{m}</MenuButton>)}
        </MenuBar>
        <Tabs>
          <Tab $on>Layout</Tab>
          {tabNames.map((t) => <Tab key={t}>{t}</Tab>)}
          <Tab aria-label="Add workspace"><Icon n="plus" s={7} /></Tab>
        </Tabs>
        <TopEnd $gap={5}>
          <DataBlock icon="scene" name="Scene" />
          <DataBlock icon="layers" name="View Layer" />
        </TopEnd>
      </TopBar>

      <Main>
        <Column>
          <Area $grow>
            <ToolHeader>
              <Row>
                <IconDrop icon="grid3d" label="Editor type" />
                <ActiveTool><Icon n="cursor" /></ActiveTool>
                <Group>
                  {["selNew", "selAdd", "selSub", "selXor", "selAnd"].map((n, i) => (
                    <IconButton key={n} $tone={i ? "off" : "on"} aria-label={n}><Icon n={n} /></IconButton>
                  ))}
                </Group>
              </Row>
              <Middle $gap={6}>
                <Select icon="axes" w={61} label="Orientation" value="グロー..." />
                <IconDrop icon="link" label="Pivot" />
                <Group>
                  <IconButton $tone="dim" aria-label="Snap"><Icon n="magnet" /></IconButton>
                  <IconDrop icon="snap" w={24} label="Snap to" />
                </Group>
                <Group>
                  <IconButton $tone="dim" aria-label="Proportional editing"><Icon n="prop" /></IconButton>
                  <IconDrop icon="falloff" w={24} dim label="Falloff" />
                </Group>
              </Middle>
              <End $gap={5}>
                <Row $gap={2}>
                  <Plain><Icon n="butterfly" /></Plain>
                  <Group>
                    {["X", "Y", "Z"].map((a) => <IconButton key={a} $tone="dim" $w={13}>{a}</IconButton>)}
                  </Group>
                </Row>
                <IconButton $tone="dim" aria-label="Auto merge"><Icon n="merge" /></IconButton>
                <OptionsDrop>オプション<Icon n="chevron" s={8} /></OptionsDrop>
              </End>
            </ToolHeader>

            <Viewport>
              <ModelView />
              <ViewHeader>
                <Row $gap={5}>
                  <Select icon="editMode" w={85} label="モード" value="編集モード" />
                  <Group $border>
                    <IconButton aria-label="頂点選択"><Icon n="vert" /></IconButton>
                    <IconButton aria-label="辺選択"><Icon n="edge" /></IconButton>
                    <IconButton $tone="on" aria-label="面選択"><Icon n="face" /></IconButton>
                  </Group>
                  <Row $gap={2}>
                    {["ビュー", "選択", "追加", "メッシュ", "頂点", "辺", "面", "UV"].map((m) => <ViewMenu key={m}>{m}</ViewMenu>)}
                  </Row>
                </Row>
                <Row $gap={5}>
                  <IconDrop icon="eyeCursor" w={24} label="Visibility" />
                  <Group $gap={0}>
                    <IconButton $tone="on" $w={15} aria-label="Gizmo"><Icon n="gizmo" /></IconButton>
                    <IconButton $tone="dark" $w={15} aria-label="Gizmo options"><Icon n="chevron" s={8} /></IconButton>
                  </Group>
                  <Group $gap={0}>
                    <IconButton $tone="on" $w={15} aria-label="Overlays"><Icon n="overlay" /></IconButton>
                    <IconButton $tone="dark" $w={15} aria-label="Overlay options"><Icon n="chevron" s={8} /></IconButton>
                  </Group>
                  <IconButton $w={15} aria-label="X-ray"><Icon n="xray" /></IconButton>
                  <Anchor>
                    <Group $border>
                      {["wire", "solid", "matprev", "rendered"].map((n) => (
                        <IconButton key={n} $tone={n === "solid" ? "on" : "off"} aria-label={n}><Icon n={n} /></IconButton>
                      ))}
                      <ShadingToggle $w={15} aria-label="シェーディング"><Icon n="chevron" s={8} /></ShadingToggle>
                    </Group>
                    <ShadingPopover />
                  </Anchor>
                </Row>
              </ViewHeader>
              <ViewBody>
                <Toolbar>
                  {toolBlocks.map((b) => (
                    <ToolBlock key={b.items[0][0]} $h={b.h}>
                      {b.items.map(([n, more]) => (
                        <ToolButton key={n} $on={n === "select"} aria-label={n}>
                          <Svg $s={n === "addon" ? 22 : 19} viewBox="0 0 24 24" aria-hidden="true">{tools[n]}</Svg>
                          {more && <Corner />}
                        </ToolButton>
                      ))}
                    </ToolBlock>
                  ))}
                </Toolbar>
                <ViewInfo>
                  <div>
                    <InfoText>ライト・平行投影</InfoText>
                    <InfoText>(1) Cylinder.001</InfoText>
                    <InfoText>10 Centimeters</InfoText>
                  </div>
                  <OperatorPanel><Icon n="tri" s={8} />移動</OperatorPanel>
                </ViewInfo>
              </ViewBody>
            </Viewport>
          </Area>

          <Timeline>
            <TimeHeader>
              <TimeMenus>
                <IconDrop icon="clock" label="Editor type" />
                <TimeGap />
                <TimeDrop>再生<Icon n="chevron" s={8} /></TimeDrop>
                <TimeDrop>キーイング<Icon n="chevron" s={8} /></TimeDrop>
                <TimeMenu>ビュー</TimeMenu>
                <TimeMenu>マーカー</TimeMenu>
              </TimeMenus>
              <Middle $gap={5}>
                <IconButton aria-label="Auto keying"><Icon n="record" /></IconButton>
                <Group>
                  {transport.map((n) => <IconButton key={n} $w={15} aria-label={n}><Icon n={n} /></IconButton>)}
                </Group>
              </Middle>
              <End $gap={5}>
                <FrameField $w={57} $center><input aria-label="Current frame" defaultValue="1" /></FrameField>
                <Group>
                  <IconButton $w={14} aria-label="Preview range"><Icon n="stopwatch" /></IconButton>
                  <FrameField $w={67}>開始<input defaultValue="1" /></FrameField>
                  <FrameField $w={67}>終了<input defaultValue="250" /></FrameField>
                </Group>
              </End>
            </TimeHeader>
            <Ruler>
              <Current>1</Current>
              {Array.from({ length: 25 }, (_, i) => <span key={i}>{(i + 1) * 10}</span>)}
            </Ruler>
            <ScrollTrack>
              <Icon n="right" s={6} />
              <ScrollThumb><i /><i /></ScrollThumb>
              <Icon n="left" s={6} />
            </ScrollTrack>
          </Timeline>
        </Column>

        <Column>
          <Outliner />
          <Props>
            <PropNav>
              {propTabs.map((t, i) => (
                <PropTab key={i} $c={t.c} $on={t.on} aria-label={t.n}><Icon n={t.n} /></PropTab>
              ))}
            </PropNav>
            <PropBody>
              <Crumb>
                <DataIcon $c="#e09050"><Icon n="xray" s={10} /></DataIcon>
                Cylinder.001
                <Icon n="pin" />
              </Crumb>
              <AddModifier>
                <Select label="モディファイアー" value="モディファイアーを追加" />
              </AddModifier>
            </PropBody>
          </Props>
        </Column>
      </Main>

      <Status>
        <Row $gap={14}>
          <Row $gap={7}><Icon n="mouseL" />選択</Row>
          <Row $gap={7}><Icon n="mouseDrag" />ボックス選択</Row>
        </Row>
        <Row $gap={7}><Icon n="mouseM" />ビューを回転</Row>
        <Row $gap={7}><Icon n="mouseR" />メニュー呼び出し</Row>
        <span>Cylinder.001 | 頂点:16/16 | 辺:24/24 | 面:10/10 | 三角面:28 | メモリ:50.2 MiB | 2.83.0</span>
      </Status>
    </Page>
  );
}
